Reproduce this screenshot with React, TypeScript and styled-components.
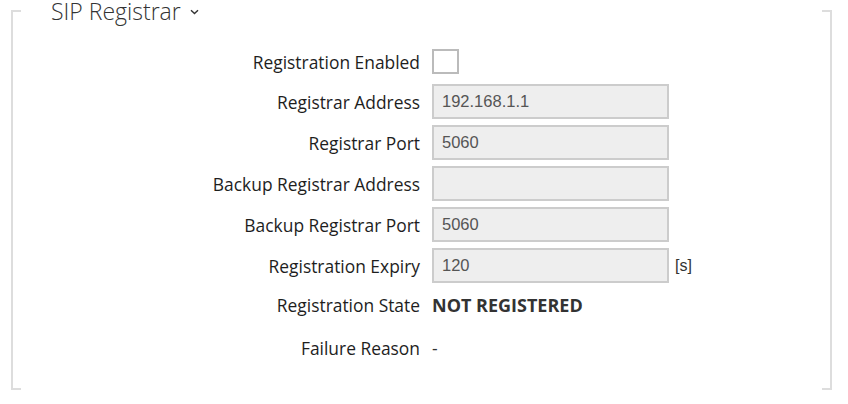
import styled, { createGlobalStyle } from "styled-components";

const GlobalStyle = createGlobalStyle`
  html, body {
    margin: 0;
    padding: 0;
    background: #ffffff;
  }
  body {
    font-family: "Open Sans", "Noto Sans", sans-serif;
    color: #222222;
  }
`;

interface Field {
  label: string;
  kind: "checkbox" | "input" | "text" | "strong";
  value?: string;
  unit?: string;
}

const fields: Field[] = [
  { label: "Registration Enabled", kind: "checkbox" },
  { label: "Registrar Address", kind: "input", value: "192.168.1.1" },
  { label: "Registrar Port", kind: "input", value: "5060" },
  { label: "Backup Registrar Address", kind: "input", value: "" },
  { label: "Backup Registrar Port", kind: "input", value: "5060" },
  { label: "Registration Expiry", kind: "input", value: "120", unit: "[s]" },
  { label: "Registration State", kind: "strong", value: "NOT REGISTERED" },
  { label: "Failure Reason", kind: "text", value: "-" },
];

const Page = styled.div`
  width: 848px;
  height: 404px;
  padding: 10px 16px 0 11px;
  box-sizing: border-box;
`;

// section frame: side borders with small ticks at the corners
const Frame = styled.section`
  position: relative;
  display: flow-root;
  height: 380px;
  border-left: 2px solid #dddddd;
  border-right: 2px solid #dddddd;
  box-sizing: border-box;

  &::before,
  &::after {
    content: "";
    position: absolute;
    top: 0;
    bottom: 0;
    width: 8px;
    border-top: 2px solid #dddddd;
    border-bottom: 2px solid #dddddd;
    box-sizing: border-box;
    pointer-events: none;
  }
  &::before {
    left: 0;
  }
  &::after {
    right: 0;
  }
`;

const Legend = styled.h2`
  margin: -10px 0 0 38px;
  display: flex;
  align-items: center;
  gap: 9px;
  font-family: "Open Sans", "Noto Sans", sans-serif;
  font-size: 23px;
  font-weight: 300;
  line-height: 22px;
  color: #333333;
  background: #ffffff;
  width: max-content;
  padding-right: 4px;
`;

const Chevron = styled.svg`
  width: 9px;
  height: 6px;
  margin-top: 2px;
`;

const Form = styled.div`
  display: flex;
  flex-direction: column;
  margin-top: 27px;
`;

const Row = styled.div<{ $height: number; $gap: number }>`
  display: flex;
  align-items: center;
  height: ${(p) => p.$height}px;
  margin-top: ${(p) => p.$gap}px;
`;

const Label = styled.label`
  width: 407px;
  margin-right: 12px;
  text-align: right;
  font-size: 17.4px;
  color: #1e1e1e;
  white-space: nowrap;
`;

const Checkbox = styled.span`
  display: block;
  width: 27px;
  height: 25px;
  border: 2px solid #bbbbbb;
  box-sizing: border-box;
  background: #ffffff;
`;

const Input = styled.input`
  width: 237px;
  height: 35px;
  box-sizing: border-box;
  border: 2px solid #cccccc;
  background: #eeeeee;
  padding: 0 8px;
  font-family: "Liberation Sans", Arial, sans-serif;
  font-size: 16.5px;
  color: #555555;
  outline: none;
`;

const Unit = styled.span`
  margin-left: 6px;
  font-family: "Liberation Sans", Arial, sans-serif;
  font-size: 16px;
  color: #333333;
`;

const Value = styled.span<{ $strong?: boolean }>`
  font-size: ${(p) => (p.$strong ? "18px" : "17.4px")};
  font-weight: ${(p) => (p.$strong ? 700 : 400)};
  color: #333333;
`;

function rowMetrics(kind: Field["kind"], index: number) {
  if (kind === "checkbox") return { height: 25, gap: 0 };
  if (kind === "input") return { height: 35, gap: index === 1 ? 10 : 6 };
  if (kind === "strong") return { height: 30, gap: 7 };
  return { height: 30, gap: 13 };
}

export default function App() {
  return (
    <>
      <GlobalStyle />
      <Page>
        <Frame>
          <Legend>
            SIP Registrar
            <Chevron viewBox="0 0 9 6">
              <path
                d="M1 1.2 L4.5 4.6 L8 1.2"
                fill="none"
                stroke="#333"
                strokeWidth="1.4"
              />
            </Chevron>
          </Legend>
          <Form>
            {fields.map((f, i) => {
              const m = rowMetrics(f.kind, i);
              return (
                <Row key={f.label} $height={m.height} $gap={m.gap}>
                  <Label>{f.label}</Label>
                  {f.kind === "checkbox" && <Checkbox />}
                  {f.kind === "input" && (
                    <Input defaultValue={f.value} readOnly />
                  )}
                  {f.kind === "strong" && <Value $strong>{f.value}</Value>}
                  {f.kind === "text" && <Value>{f.value}</Value>}
                  {f.unit && <Unit>{f.unit}</Unit>}
                </Row>
              );
            })}
          </Form>
        </Frame>
      </Page>
    </>
  );
}
